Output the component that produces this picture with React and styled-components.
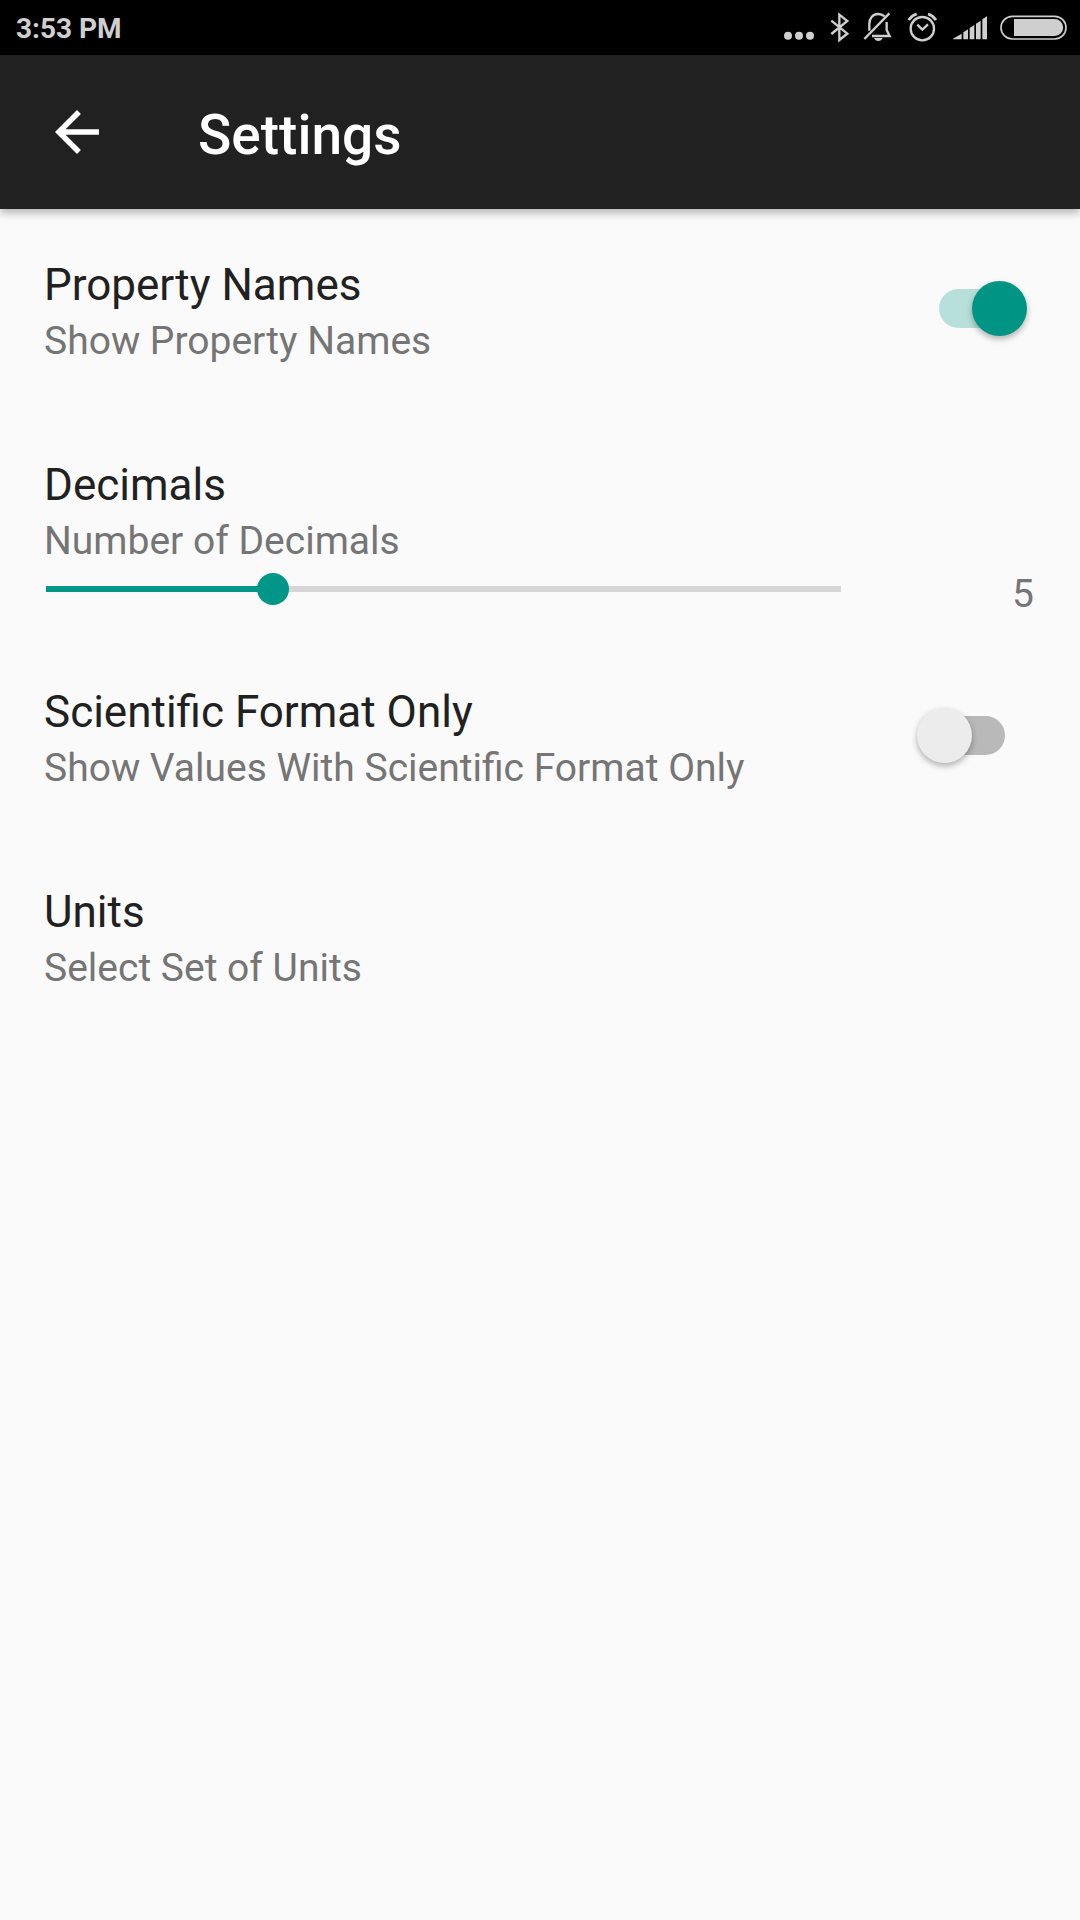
import React, { useState } from "react";
import styled, { createGlobalStyle } from "styled-components";

const TEAL = "#009688";
const STATUS = "#cfcfcf";

const GlobalStyle = createGlobalStyle`
  *, *::before, *::after { box-sizing: border-box; }
  body {
    margin: 0;
    background: #fafafa;
    font-family: Roboto, "Noto Sans", sans-serif;
  }
`;

const Screen = styled.div`
  display: flex;
  flex-direction: column;
  min-height: 100vh;
  background: #fafafa;
`;

const StatusBar = styled.div`
  display: flex;
  align-items: center;
  justify-content: space-between;
  height: 55px;
  padding: 0 13px 0 16px;
  background: #000;
  color: ${STATUS};
`;

const Clock = styled.time`
  padding-top: 2px;
  font-size: 28px;
  line-height: 32px;
  font-weight: 700;
`;

const StatusIcons = styled.div`
  display: flex;
  align-items: center;
  gap: 14px;
`;

const StatusIcon = styled.svg`
  display: block;
  width: ${(p) => p.$width}px;
  height: 31px;
  fill: none;
  stroke: ${STATUS};
  overflow: visible;
`;

const AppBar = styled.header`
  display: flex;
  align-items: center;
  gap: 88px;
  height: 154px;
  padding: 0 44px;
  background: #212121;
  color: #fff;
  box-shadow: 0 4px 8px rgba(0, 0, 0, 0.28);
`;

const BackButton = styled.button`
  display: flex;
  padding: 0;
  border: 0;
  background: none;
  color: inherit;
  cursor: pointer;

  svg {
    width: 66px;
    height: 66px;
    fill: currentColor;
  }
`;

const PageTitle = styled.h1`
  margin: 0;
  padding-top: 6px;
  font-size: 55px;
  line-height: 64px;
  font-weight: 500;
`;

const Preferences = styled.main`
  display: flex;
  flex-direction: column;
`;

const Row = styled.div`
  display: flex;
  align-items: flex-start;
  justify-content: space-between;
  padding: 45px 44px 43px;
`;

const SliderBlock = styled.div`
  padding: 45px 44px 14px;
`;

const LinkRow = styled.a`
  display: block;
  padding: 45px 44px 43px;
  text-decoration: none;
`;

const Label = styled.label`
  display: block;
`;

const Title = styled.span`
  display: block;
  font-size: 44px;
  line-height: 62px;
  color: #212121;
`;

const Summary = styled.span`
  display: block;
  font-size: 39px;
  line-height: 50px;
  color: #757575;
`;

const Switch = styled.input`
  appearance: none;
  display: grid;
  flex: none;
  align-items: center;
  width: 110px;
  height: 55px;
  margin: 27px 9px 0 0;
  cursor: pointer;

  &::before,
  &::after {
    content: "";
    grid-area: 1 / 1;
  }

  &::before {
    justify-self: center;
    width: 66px;
    height: 39px;
    border-radius: 20px;
    background: #b9b9b9;
  }

  &::after {
    justify-self: start;
    width: 55px;
    height: 55px;
    border-radius: 50%;
    background: #ececec;
    box-shadow: 0 3px 6px rgba(0, 0, 0, 0.3);
  }

  &:checked::before {
    background: #b8e0db;
  }

  &:checked::after {
    justify-self: end;
    background: #009485;
  }
`;

const SliderRow = styled.div`
  display: flex;
  align-items: flex-start;
`;

const Slider = styled.input`
  appearance: none;
  flex: 1;
  min-width: 0;
  height: 46px;
  margin: 0 0 0 -14px;
  background:
    linear-gradient(${TEAL}, ${TEAL}) 16px center / calc((100% - 32px) * var(--fill)) 6px no-repeat,
    linear-gradient(#d6d6d6, #d6d6d6) 16px center / calc(100% - 32px) 6px no-repeat;
  cursor: pointer;

  &::-webkit-slider-thumb {
    appearance: none;
    width: 32px;
    height: 32px;
    border: 0;
    border-radius: 50%;
    background: ${TEAL};
  }
`;

const SliderValue = styled.output`
  width: 179px;
  padding-right: 2px;
  font-size: 39px;
  line-height: 56px;
  text-align: right;
  color: #757575;
`;

function SwitchPreference({ id, title, summary, initial }) {
  const [on, setOn] = useState(initial);
  return (
    <Row>
      <Label htmlFor={id}>
        <Title>{title}</Title>
        <Summary>{summary}</Summary>
      </Label>
      <Switch
        id={id}
        type="checkbox"
        role="switch"
        checked={on}
        onChange={(e) => setOn(e.target.checked)}
      />
    </Row>
  );
}

function SliderPreference({ id, title, summary, min, max, initial }) {
  const [value, setValue] = useState(initial);
  return (
    <SliderBlock>
      <Label htmlFor={id}>
        <Title>{title}</Title>
        <Summary>{summary}</Summary>
      </Label>
      <SliderRow>
        <Slider
          id={id}
          type="range"
          min={min}
          max={max}
          value={value}
          onChange={(e) => setValue(Number(e.target.value))}
          style={{ "--fill": (value - min) / (max - min) }}
        />
        <SliderValue htmlFor={id}>{value}</SliderValue>
      </SliderRow>
    </SliderBlock>
  );
}

function SystemIcons() {
  return (
    <StatusIcons>
      <StatusIcon $width={33} viewBox="42 36 99 93" aria-hidden="true">
        <g fill={STATUS} stroke="none">
          <circle cx="54" cy="107" r="12" />
          <circle cx="87" cy="107" r="12" />
          <circle cx="120" cy="107" r="12" />
        </g>
      </StatusIcon>
      <StatusIcon $width={18} viewBox="183 36 54 93" strokeWidth="7" aria-hidden="true">
        <path d="M184 62L232 101L208 120V44L232 63L184 102" />
      </StatusIcon>
      <StatusIcon $width={28} viewBox="279 36 84 93" strokeWidth="7" aria-hidden="true">
        <path d="M283 117L358 40" />
        <path d="M298 92V72C298 54 309 42 325 42C333 42 339 45 344 49" />
        <path d="M350 66V90L359 108H306" />
        <path d="M312 114H338Q334 123 325 123Q316 123 312 114Z" fill={STATUS} stroke="none" />
      </StatusIcon>
      <StatusIcon $width={34} viewBox="405 36 102 93" strokeWidth="7" aria-hidden="true">
        <circle cx="457" cy="86" r="35" />
        <path d="M442 74L457 89L474 73" />
        <path d="M416 60Q424 47 440 42M498 60Q490 47 474 42" strokeWidth="8" />
      </StatusIcon>
      <StatusIcon $width={33} viewBox="99 36 99 93" aria-hidden="true">
        <path
          d="M99 118V116L125 101V118ZM130 118V97L144 88V118ZM149 118V84L163 75V118ZM168 118V71L182 62V118ZM187 118V58L201 49V118Z"
          fill={STATUS}
          stroke="none"
        />
      </StatusIcon>
      <StatusIcon $width={67} viewBox="240 36 201 93" strokeWidth="5" aria-hidden="true">
        <rect x="243" y="49" width="195" height="68" rx="34" />
        <path d="M282 57H404A25 25 0 0 1 404 108H282Z" fill={STATUS} stroke="none" />
      </StatusIcon>
    </StatusIcons>
  );
}

export default function App() {
  return (
    <Screen>
      <GlobalStyle />
      <StatusBar>
        <Clock>3:53 PM</Clock>
        <SystemIcons />
      </StatusBar>
      <AppBar>
        <BackButton type="button" aria-label="Back">
          <svg viewBox="0 0 24 24" aria-hidden="true">
            <path d="M20 11H7.83l5.59-5.59L12 4l-8 8 8 8 1.41-1.41L7.83 13H20v-2z" />
          </svg>
        </BackButton>
        <PageTitle>Settings</PageTitle>
      </AppBar>
      <Preferences>
        <SwitchPreference
          id="property-names"
          title="Property Names"
          summary="Show Property Names"
          initial={true}
        />
        <SliderPreference
          id="decimals"
          title="Decimals"
          summary="Number of Decimals"
          min={3}
          max={10}
          initial={5}
        />
        <SwitchPreference
          id="scientific"
          title="Scientific Format Only"
          summary="Show Values With Scientific Format Only"
          initial={false}
        />
        <LinkRow href="#units">
          <Title>Units</Title>
          <Summary>Select Set of Units</Summary>
        </LinkRow>
      </Preferences>
    </Screen>
  );
}
